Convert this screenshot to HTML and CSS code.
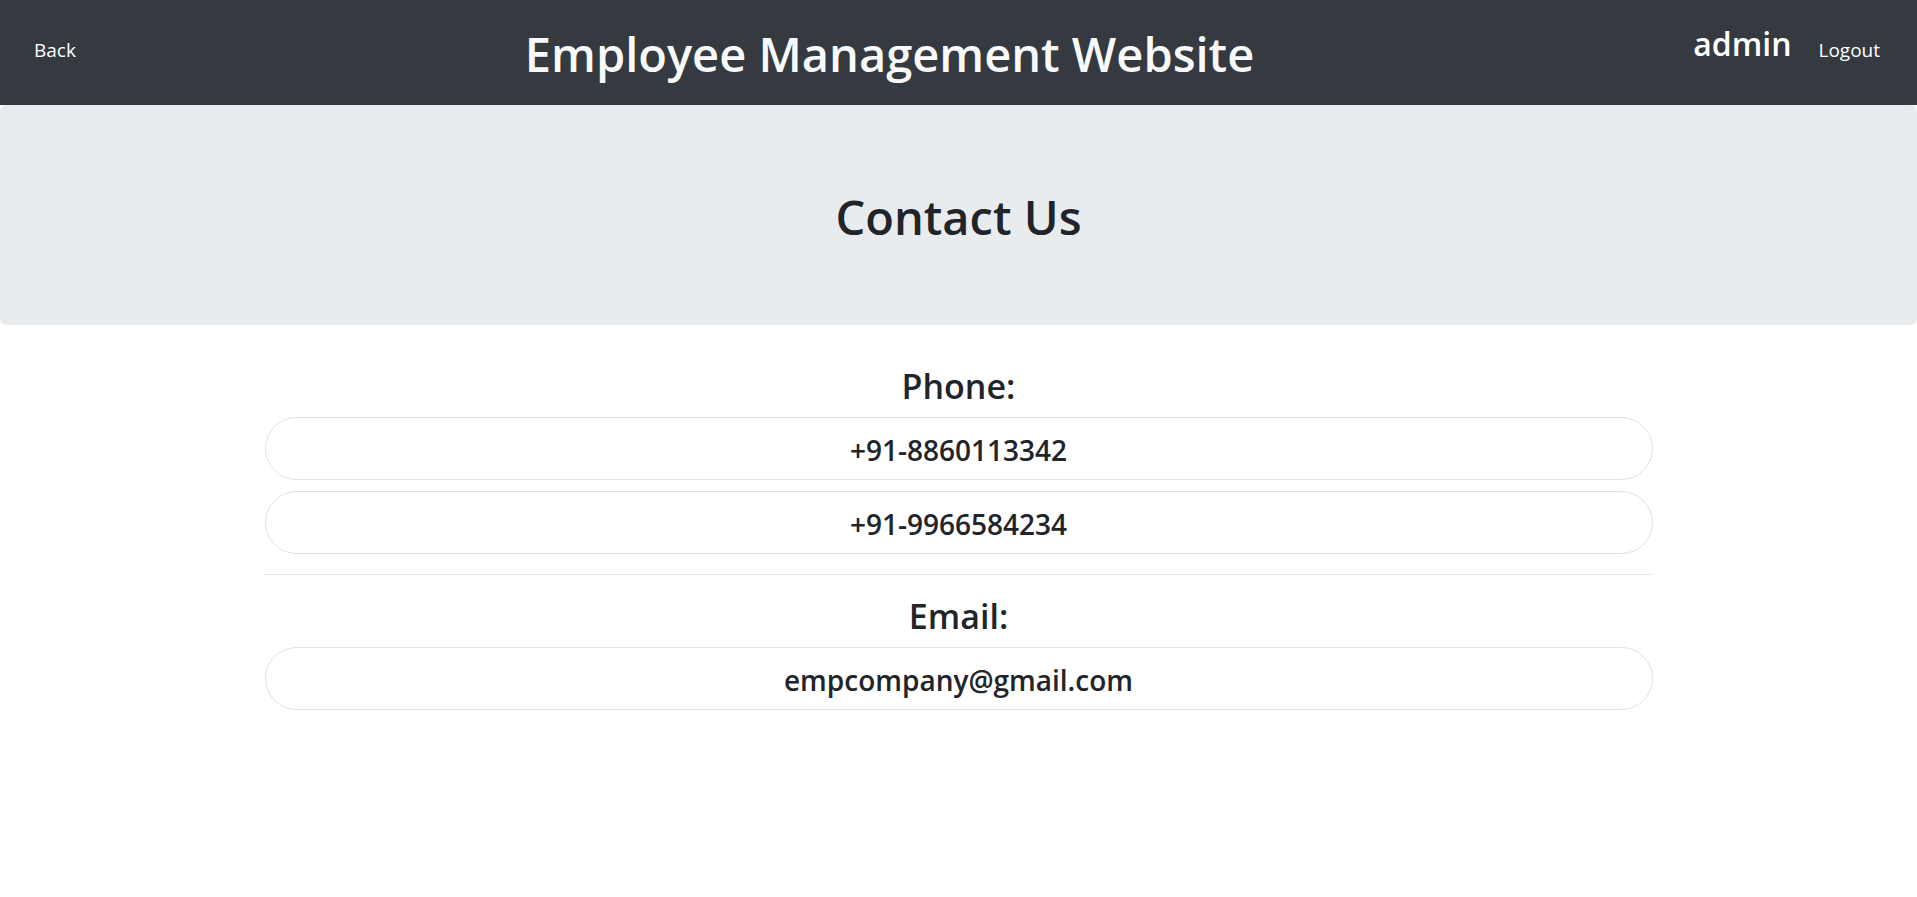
FILE: index.html
```html
<!DOCTYPE html>
<html lang="en">
<head>
    <meta charset="UTF-8">
    <meta name="viewport" content="width=device-width, initial-scale=1.0">
    <title>Contact Us</title>
    <link rel="stylesheet" href="styles.css">
</head>
<body>
    <nav class="topbar">
        <a class="nav-link back-link" href="#">Back</a>
        <h1 class="brand">Employee Management Website</h1>
        <div class="user-box">
            <h3 class="user-name">admin</h3>
            <a class="nav-link" href="#">Logout</a>
        </div>
    </nav>

    <div class="jumbotron">
        <h1>Contact Us</h1>
    </div>

    <div class="container">
        <h3 class="section-title">Phone:</h3>
        <div class="pill-item"><h4>+91-8860113342</h4></div>
        <div class="pill-item"><h4>+91-9966584234</h4></div>
        <hr>
        <h3 class="section-title">Email:</h3>
        <div class="pill-item"><h4>empcompany@gmail.com</h4></div>
    </div>
</body>
</html>
```

FILE: styles.css
```css
body {
    margin: 0;
    font-family: "Open Sans", Arial, sans-serif;
    color: #212529;
    background: #fff;
}
h1, h3, h4 {
    margin: 0;
    font-weight: 600;
    line-height: 1.2;
}
.topbar {
    display: flex;
    align-items: center;
    height: 105px;
    padding: 0 27px 0 24px;
    box-sizing: border-box;
    background: #343a40;
}
.nav-link {
    padding: 10px;
    font-size: 19px;
    line-height: 30px;
    color: #fff;
    text-decoration: none;
}
.back-link {
    margin-bottom: 6px;
}
.brand {
    flex: 1;
    margin-top: 4px;
    text-align: center;
    font-size: 47px;
    color: #f8f9fa;
}
.user-box {
    display: flex;
    align-items: center;
}
.user-name {
    font-size: 32px;
    color: #fff;
    margin: 0 17px 16px 0;
}
.user-box .nav-link {
    margin-bottom: 6px;
}
.jumbotron {
    display: flex;
    align-items: center;
    justify-content: center;
    height: 220px;
    padding-top: 4px;
    box-sizing: border-box;
    margin-bottom: 40px;
    background: #e9ecef;
    border-radius: 6px;
}
.jumbotron h1 {
    font-size: 47px;
}
.container {
    width: 1388px;
    margin: 0 auto;
    text-align: center;
}
.section-title {
    font-size: 34px;
    line-height: 42px;
    margin-bottom: 10px;
}
.pill-item {
    height: 63px;
    box-sizing: border-box;
    padding-top: 14px;
    margin-bottom: 11px;
    border: 1px solid #dfe1e4;
    border-radius: 999px;
}
.pill-item h4 {
    font-size: 28px;
    line-height: 36px;
}
hr {
    margin: 20px 0;
    border: 0;
    border-top: 1px solid #e5e5e5;
}
```
